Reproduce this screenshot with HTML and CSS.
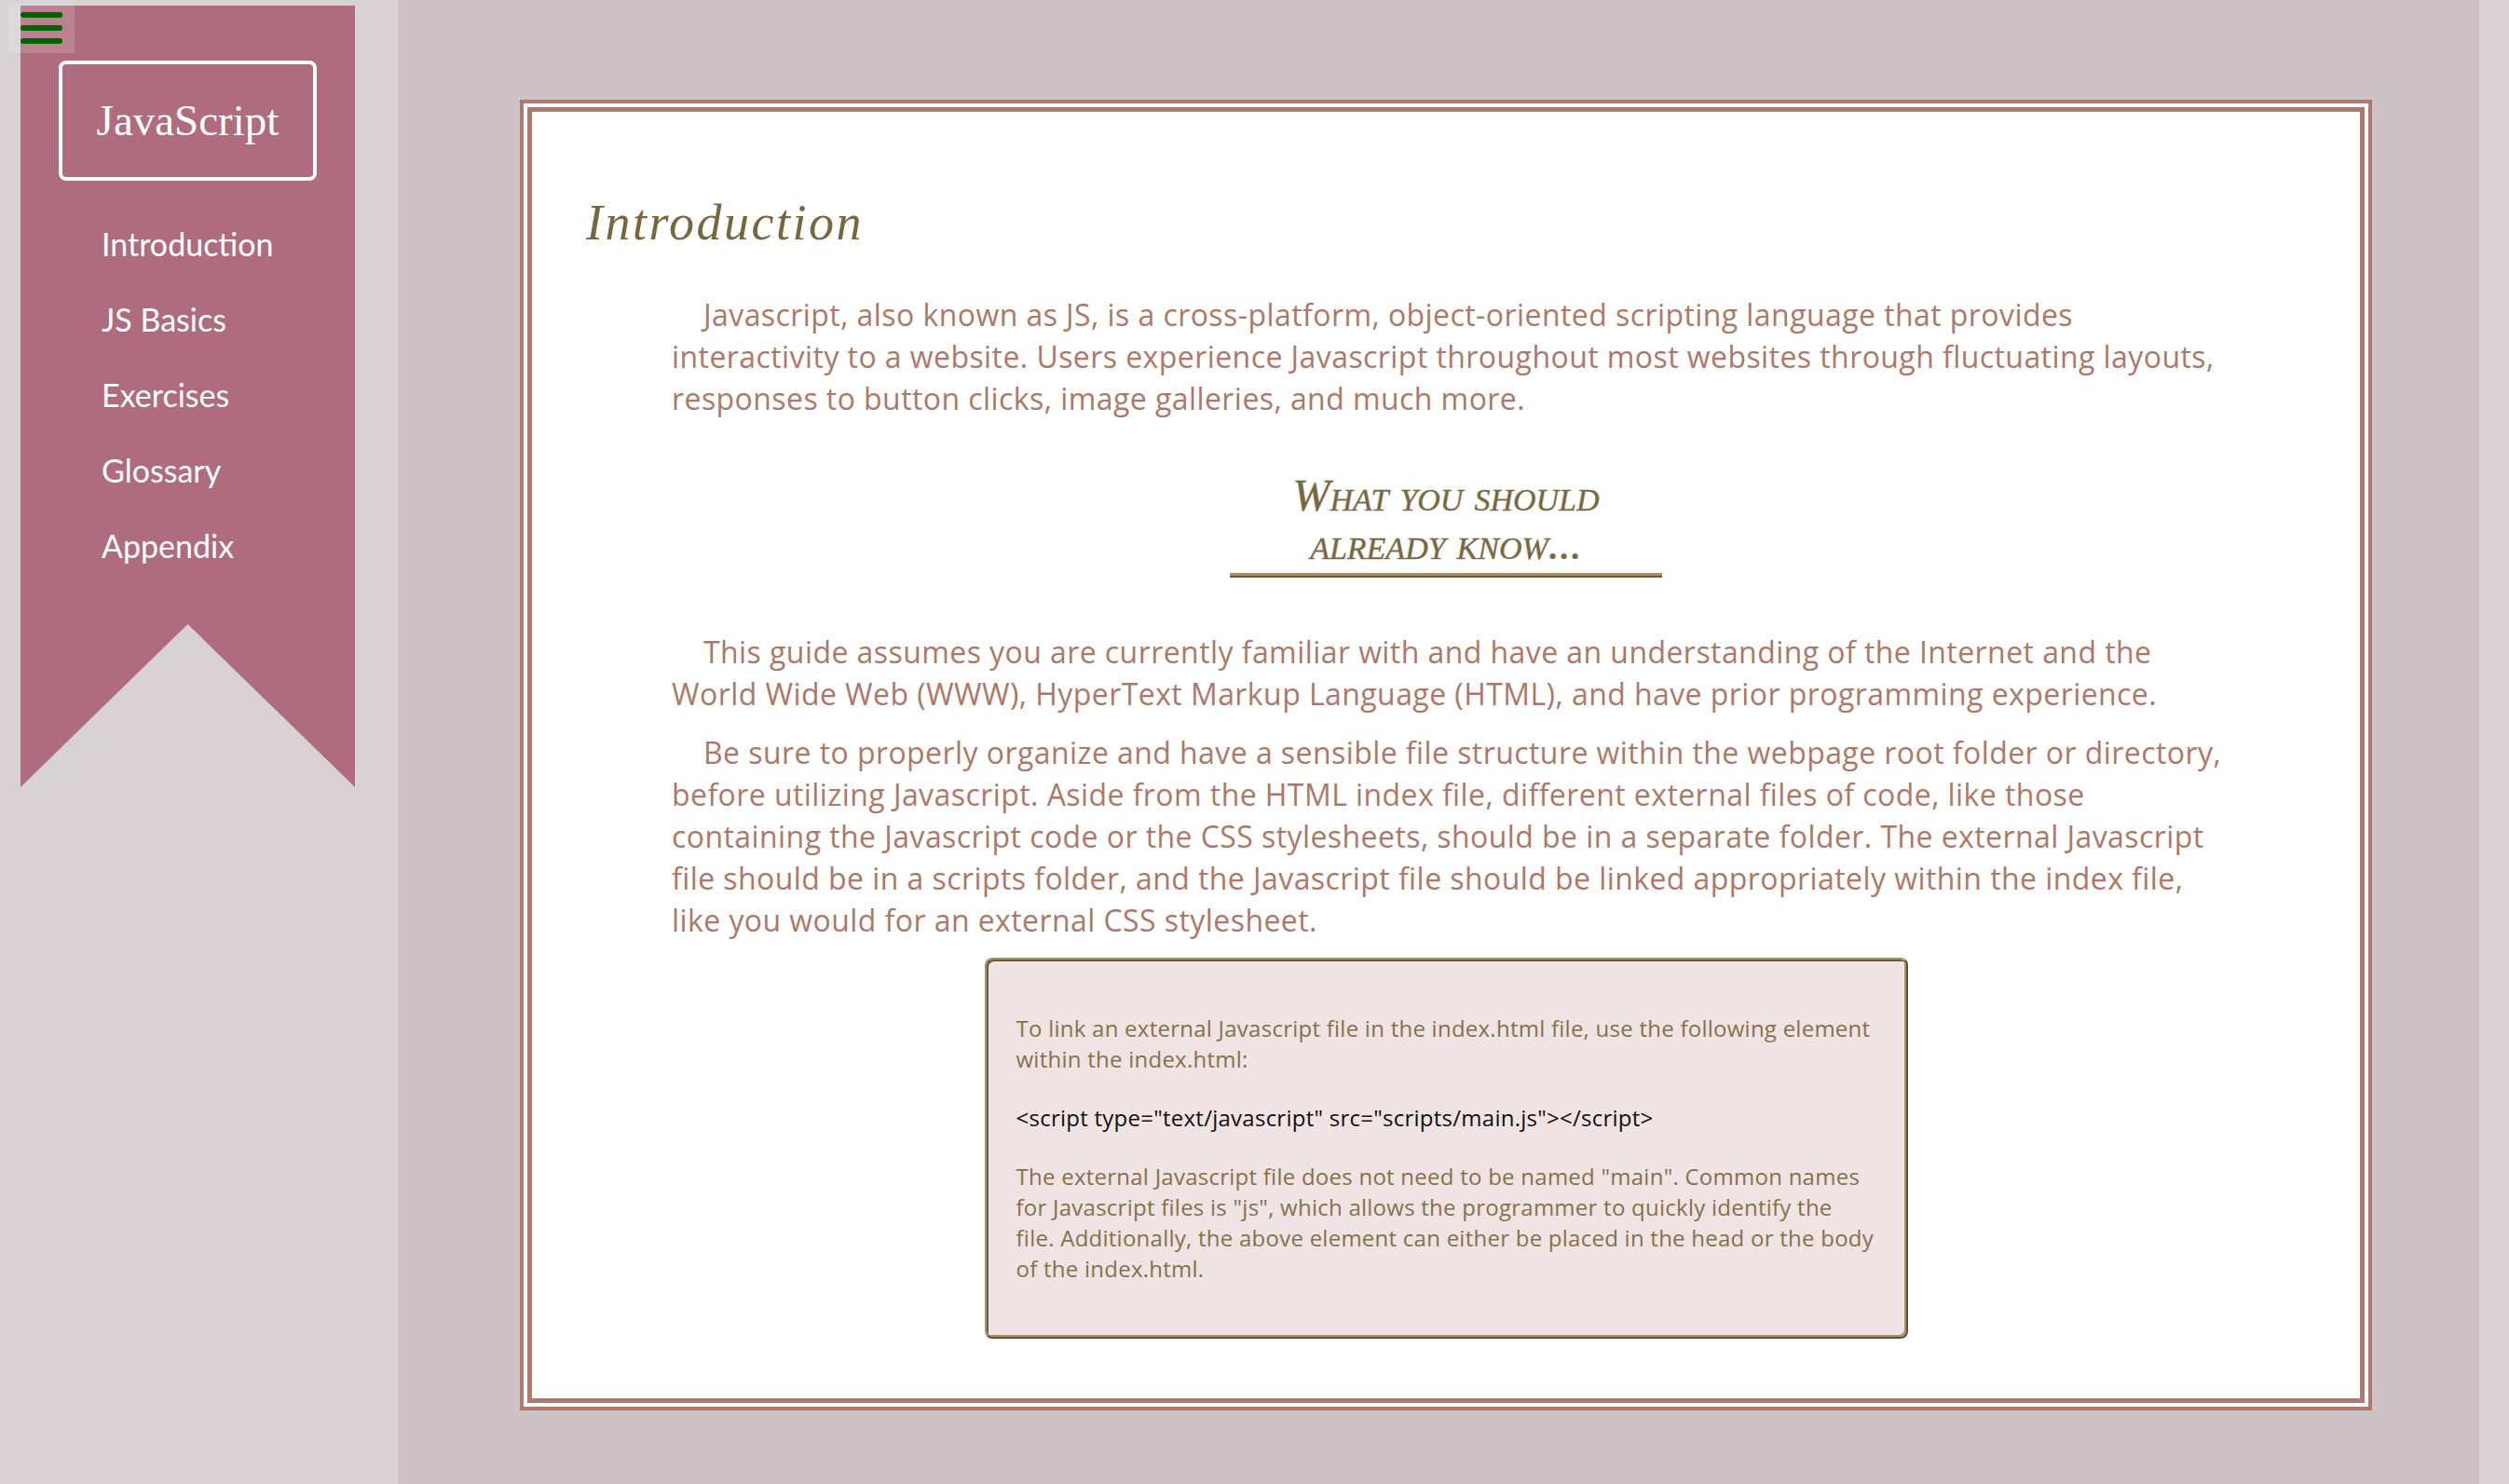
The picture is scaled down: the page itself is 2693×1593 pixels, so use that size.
FILE: index.html
```html
<!DOCTYPE html>
<html lang="en">
<head>
<meta charset="utf-8">
<title>JavaScript - Introduction</title>
<link rel="stylesheet" href="styles.css">
</head>
<body>
<div class="page">
  <aside class="sidebar">
    <button class="menu-toggle" aria-label="Menu">
      <span class="bar"></span>
      <span class="bar"></span>
      <span class="bar"></span>
    </button>
    <nav class="ribbon">
      <div class="brand">JavaScript</div>
      <ul class="nav">
        <li>Introduction</li>
        <li>JS Basics</li>
        <li>Exercises</li>
        <li>Glossary</li>
        <li>Appendix</li>
      </ul>
    </nav>
  </aside>
  <main class="main">
    <div class="frame">
      <article class="content">
        <h2 class="title">Introduction</h2>
        <p class="para">Javascript, also known as JS, is a cross-platform, object-oriented scripting language that provides interactivity to a website. Users experience Javascript throughout most websites through fluctuating layouts, responses to button clicks, image galleries, and much more.</p>
        <h3 class="subtitle">What you should already know...</h3>
        <p class="para">This guide assumes you are currently familiar with and have an understanding of the Internet and the World Wide Web (WWW), HyperText Markup Language (HTML), and have prior programming experience.</p>
        <p class="para">Be sure to properly organize and have a sensible file structure within the webpage root folder or directory, before utilizing Javascript. Aside from the HTML index file, different external files of code, like those containing the Javascript code or the CSS stylesheets, should be in a separate folder. The external Javascript file should be in a scripts folder, and the Javascript file should be linked appropriately within the index file, like you would for an external CSS stylesheet.</p>
        <div class="callout">
          <p class="note">To link an external Javascript file in the index.html file, use the following element within the index.html:</p>
          <p class="note code">&lt;script type="text/javascript" src="scripts/main.js"&gt;&lt;/script&gt;</p>
          <p class="note">The external Javascript file does not need to be named "main". Common names for Javascript files is "js", which allows the programmer to quickly identify the file. Additionally, the above element can either be placed in the head or the body of the index.html.</p>
        </div>
      </article>
    </div>
  </main>
</div>
</body>
</html>
```

FILE: styles.css
```css
html, body {
  margin: 0;
  padding: 0;
}

body {
  background: #d8d2d5;
  font-family: "Open Sans", "Lato", sans-serif;
}

.page {
  display: grid;
  grid-template-columns: 427px 2234px 1fr;
  min-height: 1593px;
}

/* ---------- sidebar ---------- */
.sidebar {
  position: relative;
  padding: 6px 46px 0 22px;
}

.menu-toggle {
  position: absolute;
  left: 9px;
  top: 3px;
  width: 71px;
  height: 54px;
  margin: 0;
  border: 0;
  padding: 10px 13px;
  box-sizing: border-box;
  background: rgba(255, 255, 255, 0.15);
  display: flex;
  flex-direction: column;
  gap: 8px;
  z-index: 2;
}

.bar {
  display: block;
  width: 45px;
  height: 6px;
  border-radius: 3px;
  background: #006400;
}

.ribbon {
  height: 839px;
  box-sizing: border-box;
  padding-top: 59px;
  background: #ae6c7e;
  clip-path: polygon(0 0, 100% 0, 100% 100%, 50% calc(100% - 175px), 0 100%);
}

.brand {
  margin: 0 41px;
  height: 129px;
  box-sizing: border-box;
  border: 4px solid #ffffff;
  border-radius: 8px;
  display: flex;
  align-items: center;
  justify-content: center;
  color: #ffffff;
  font-family: "Liberation Serif", serif;
  font-size: 47px;
  padding-bottom: 2px;
}

.nav {
  list-style: none;
  margin: 27px 0 0;
  padding: 0 0 0 87px;
}

.nav li {
  color: #ffffff;
  font-family: "Lato", sans-serif;
  font-size: 34px;
  line-height: 81px;
}

/* ---------- main ---------- */
.main {
  background: #cdc3c7;
  padding: 107px 0 0 131px;
}

.frame {
  width: 1988px;
  box-sizing: border-box;
  border: 4px solid #ad7a6d;
  padding: 4px;
  background: #ffffff;
}

.content {
  border: 5px solid #ad7a6d;
  padding: 87px 58px 64px;
  background: #ffffff;
}

.title {
  margin: 0 0 44px;
  font-family: "Liberation Serif", serif;
  font-style: italic;
  font-weight: normal;
  font-size: 54px;
  line-height: 64px;
  letter-spacing: 2.5px;
  color: #76673f;
}

.para {
  margin: 18px 86px 18px 92px;
  font-family: "Open Sans", sans-serif;
  font-size: 32px;
  line-height: 45px;
  letter-spacing: 0.43px;
  color: #ad7867;
  text-indent: 34px;
}

.subtitle {
  width: 464px;
  margin: 56px auto 57px;
  padding-bottom: 8px;
  text-align: center;
  font-family: "Liberation Serif", serif;
  font-style: italic;
  font-weight: normal;
  font-variant: small-caps;
  font-size: 48px;
  line-height: 52px;
  color: #7a6840;
  border-bottom: 2px solid #66573a;
  box-shadow: inset 0 -3px 0 #a89463;
  -webkit-text-stroke: 0.4px #7a6840;
}

.callout {
  width: 991px;
  box-sizing: border-box;
  margin: 18px auto 0;
  padding: 27px 32px;
  background: #efe3e3;
  border: 2px solid;
  border-color: #a89463 #5f5138 #5f5138 #a89463;
  border-radius: 8px;
  box-shadow: inset 2px 2px 0 #6b5b3c, inset -2px -2px 0 #a89463;
}

.note {
  margin: 30px 0;
  font-family: "Open Sans", sans-serif;
  font-size: 24px;
  line-height: 33px;
  letter-spacing: 0.25px;
  color: #86714b;
}

.note.code {
  color: #111111;
}
```
